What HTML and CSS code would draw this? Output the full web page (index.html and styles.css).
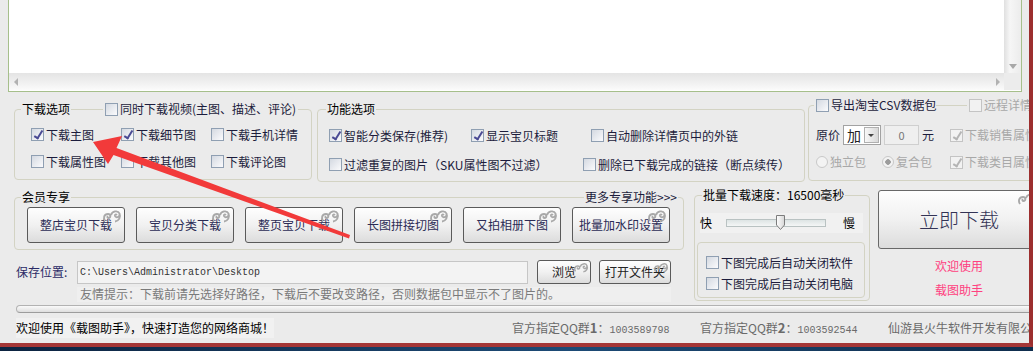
FILE: index.html
```html
<!DOCTYPE html>
<html lang="zh-CN">
<head>
    <meta charset="UTF-8">
    <title>载图助手</title>
    <link rel="stylesheet" href="styles.css">
</head>
<body>

    <div class="window">
        <!-- список ссылок -->
        <div class="listbox">
            <div class="list-area"></div>
            <div class="vscroll"><span class="arr-down"></span></div>
            <div class="hscroll"><span class="arr-left"></span><span class="arr-right"></span></div>
            <div class="corner"></div>
        </div>

        <div class="options-row">
            <div class="group g-download">
                <div class="gtitle">
                    <span class="gtitle-text">下载选项</span>
                    <label class="chk title-chk"><span class="box"></span>同时下载视频(主图、描述、评论)</label>
                </div>
                <div class="chk-grid">
                    <label class="chk on"><span class="box"></span>下载主图</label>
                    <label class="chk on"><span class="box"></span>下载细节图</label>
                    <label class="chk"><span class="box"></span>下载手机详情</label>
                    <label class="chk"><span class="box"></span>下载属性图</label>
                    <label class="chk"><span class="box"></span>下载其他图</label>
                    <label class="chk"><span class="box"></span>下载评论图</label>
                </div>
            </div>

            <div class="group g-func">
                <div class="gtitle">
                    <span class="gtitle-text">功能选项</span>
                </div>
                <div class="func-row row-a">
                    <label class="chk on"><span class="box"></span>智能分类保存(推荐)</label>
                    <label class="chk on"><span class="box"></span>显示宝贝标题</label>
                    <label class="chk"><span class="box"></span>自动删除详情页中的外链</label>
                </div>
                <div class="func-row row-b">
                    <label class="chk"><span class="box"></span>过滤重复的图片（SKU属性图不过滤）</label>
                    <label class="chk"><span class="box"></span>删除已下载完成的链接（断点续传）</label>
                </div>
            </div>

            <div class="group g-export">
                <div class="gtitle">
                    <label class="chk title-chk csv"><span class="box"></span>导出淘宝CSV数据包</label>
                    <label class="chk title-chk off"><span class="box"></span>远程详情</label>
                </div>
                <div class="export-row row-price">
                    <div class="price">
                        <span>原价</span>
                        <span class="select"><span class="select-val">加</span><span class="select-btn"></span></span>
                        <span class="num">0</span>
                        <span>元</span>
                    </div>
                    <label class="chk on off"><span class="box"></span>下载销售属性</label>
                </div>
                <div class="export-row row-pack">
                    <label class="rad off"><span class="dot"></span>独立包</label>
                    <label class="rad on off"><span class="dot"></span>复合包</label>
                    <label class="chk on off"><span class="box"></span>下载类目属性</label>
                </div>
            </div>
        </div>

        <div class="lower-row">
            <div class="left-col">
                <div class="group g-member">
                    <div class="gtitle">
                        <span class="gtitle-text">会员专享</span>
                        <span class="more">更多专享功能&gt;&gt;&gt;</span>
                    </div>
                    <div class="btn-row">
                        <button class="vip-btn">整店宝贝下载<svg class="swirl" viewBox="0 0 20 14"><path d="M3 12C1 9 2 5 6 5C9 5 9 9 6.5 9C5.5 9 5 8 5.8 7M9 6C10 2 16 1 17.5 4.5C18.5 8 14 9.5 13 7C12.5 5.5 14 5 14.8 6.2M17.5 4.5C19 8 17 12 13 12.5"/></svg></button>
                        <button class="vip-btn">宝贝分类下载<svg class="swirl" viewBox="0 0 20 14"><path d="M3 12C1 9 2 5 6 5C9 5 9 9 6.5 9C5.5 9 5 8 5.8 7M9 6C10 2 16 1 17.5 4.5C18.5 8 14 9.5 13 7C12.5 5.5 14 5 14.8 6.2M17.5 4.5C19 8 17 12 13 12.5"/></svg></button>
                        <button class="vip-btn">整页宝贝下载<svg class="swirl" viewBox="0 0 20 14"><path d="M3 12C1 9 2 5 6 5C9 5 9 9 6.5 9C5.5 9 5 8 5.8 7M9 6C10 2 16 1 17.5 4.5C18.5 8 14 9.5 13 7C12.5 5.5 14 5 14.8 6.2M17.5 4.5C19 8 17 12 13 12.5"/></svg></button>
                        <button class="vip-btn">长图拼接切图<svg class="swirl" viewBox="0 0 20 14"><path d="M3 12C1 9 2 5 6 5C9 5 9 9 6.5 9C5.5 9 5 8 5.8 7M9 6C10 2 16 1 17.5 4.5C18.5 8 14 9.5 13 7C12.5 5.5 14 5 14.8 6.2M17.5 4.5C19 8 17 12 13 12.5"/></svg></button>
                        <button class="vip-btn">又拍相册下图<svg class="swirl" viewBox="0 0 20 14"><path d="M3 12C1 9 2 5 6 5C9 5 9 9 6.5 9C5.5 9 5 8 5.8 7M9 6C10 2 16 1 17.5 4.5C18.5 8 14 9.5 13 7C12.5 5.5 14 5 14.8 6.2M17.5 4.5C19 8 17 12 13 12.5"/></svg></button>
                        <button class="vip-btn">批量加水印设置<svg class="swirl" viewBox="0 0 20 14"><path d="M3 12C1 9 2 5 6 5C9 5 9 9 6.5 9C5.5 9 5 8 5.8 7M9 6C10 2 16 1 17.5 4.5C18.5 8 14 9.5 13 7C12.5 5.5 14 5 14.8 6.2M17.5 4.5C19 8 17 12 13 12.5"/></svg></button>
                    </div>
                </div>

                <div class="save-row">
                    <span class="save-label">保存位置:</span>
                    <span class="path">C:\Users\Administrator\Desktop</span>
                    <button class="small-btn browse">浏览<svg class="swirl" viewBox="0 0 20 14"><path d="M3 12C1 9 2 5 6 5C9 5 9 9 6.5 9C5.5 9 5 8 5.8 7M9 6C10 2 16 1 17.5 4.5C18.5 8 14 9.5 13 7C12.5 5.5 14 5 14.8 6.2M17.5 4.5C19 8 17 12 13 12.5"/></svg></button>
                    <button class="small-btn open">打开文件夹<svg class="swirl" viewBox="0 0 20 14"><path d="M3 12C1 9 2 5 6 5C9 5 9 9 6.5 9C5.5 9 5 8 5.8 7M9 6C10 2 16 1 17.5 4.5C18.5 8 14 9.5 13 7C12.5 5.5 14 5 14.8 6.2M17.5 4.5C19 8 17 12 13 12.5"/></svg></button>
                </div>
                <div class="hint">友情提示：下载前请先选择好路径，下载后不要改变路径，否则数据包中显示不了图片的。</div>
            </div>

            <div class="group g-speed">
                <div class="gtitle">
                    <span class="gtitle-text">批量下载速度：16500毫秒</span>
                </div>
                <div class="slider-row">
                    <span>快</span>
                    <span class="track">
                        <svg class="thumb" viewBox="0 0 11 17"><defs><linearGradient id="tg" x1="0" y1="0" x2="1" y2="0"><stop offset="0" stop-color="#ffffff"/><stop offset="1" stop-color="#d6d6d6"/></linearGradient></defs><path d="M1.5 1.5H9.5V11L5.5 15.5L1.5 11Z" fill="url(#tg)" stroke="#7c7c7c"/></svg>
                    </span>
                    <span class="slow">慢</span>
                </div>
                <div class="auto-box">
                    <label class="chk"><span class="box"></span>下图完成后自动关闭软件</label>
                    <label class="chk"><span class="box"></span>下图完成后自动关闭电脑</label>
                </div>
            </div>

            <div class="go-col">
                <button class="go-btn">立即下载<svg class="swirl" viewBox="0 0 20 14"><path d="M3 12C1 9 2 5 6 5C9 5 9 9 6.5 9C5.5 9 5 8 5.8 7M9 6C10 2 16 1 17.5 4.5C18.5 8 14 9.5 13 7C12.5 5.5 14 5 14.8 6.2M17.5 4.5C19 8 17 12 13 12.5"/></svg></button>
                <div class="welcome">欢迎使用<br>载图助手</div>
            </div>
        </div>

        <div class="progress"></div>

        <div class="status">
            <div class="panel main"><span>欢迎使用《载图助手》，快速打造您的网络商城！</span></div>
            <div class="panel qq">官方指定QQ群<b>1</b>：<span class="qq-num">1003589798</span></div>
            <div class="panel qq">官方指定QQ群<b>2</b>：<span class="qq-num">1003592544</span></div>
            <div class="panel qq">仙游县火牛软件开发有限公司</div>
        </div>

        <!-- красная стрелка поверх окна -->
        <svg class="arrow-overlay" width="1029" height="343" viewBox="0 0 1029 343">
            <polygon points="93,142 122,136 116.5,148 350,235 349,238.5 113.5,155 108,164" fill="#f23a3a"/>
        </svg>
    </div>

</body>
</html>
```

FILE: styles.css
```css
* {
    box-sizing: border-box;
}

html, body {
    margin: 0;
}

body {
    width: 1033px;
    height: 351px;
    overflow: hidden;
    background: linear-gradient(90deg, #0c2340, #1d4b76 55%, #0f2d4d);
    font: 12px/14px "Noto Sans CJK SC", "DejaVu Sans", sans-serif;
    color: #1c1c3c;
}

button {
    font: inherit;
    padding: 0;
    cursor: pointer;
}

.window {
    position: relative;
    width: 1033px;
    height: 347px;
    background: #ebebeb;
    border-right: 4px solid #9c2e2e;
    border-bottom: 4px solid #a43636;
    overflow: hidden;
}

/* list box */
.listbox {
    display: grid;
    grid-template-columns: 1fr 17px;
    grid-template-rows: 1fr 17px;
    width: 1014px;
    height: 93px;
    margin: -1px 0 0 8px;
    padding-bottom: 1px;
    border: 1px solid #a6bf8b;
    background: #fff;
}

.vscroll {
    display: flex;
    align-items: flex-end;
    justify-content: center;
    padding-bottom: 4px;
    background: linear-gradient(90deg, #e0e0e0, #f6f6f6 35%, #ececec);
}

.arr-down {
    width: 0;
    border-left: 4px solid transparent;
    border-right: 4px solid transparent;
    border-top: 5px solid #a8a8a8;
}

.hscroll {
    display: flex;
    align-items: center;
    justify-content: space-between;
    padding: 0 4px 0 5px;
    background: linear-gradient(#e4e4e4, #f1f1f1 60%, #fbfbfb);
}

.arr-left {
    border-top: 4px solid transparent;
    border-bottom: 4px solid transparent;
    border-right: 4px solid #b2b2b2;
}

.arr-right {
    border-top: 4px solid transparent;
    border-bottom: 4px solid transparent;
    border-left: 4px solid #b2b2b2;
}

.corner {
    background: #ececec;
}

/* groups */
.options-row {
    display: flex;
    align-items: flex-start;
    margin-top: 13px;
}

.group {
    flex: none;
    border: 1px solid #d3d3c3;
    border-radius: 4px;
}

.gtitle {
    display: flex;
    align-items: center;
    height: 14px;
    margin-top: -8px;
    white-space: nowrap;
}

.gtitle > * {
    flex: none;
}

.gtitle-text {
    background: #ebebeb;
    padding: 0 1px;
    margin-left: 6px;
    color: #000;
}

.title-chk {
    background: #ebebeb;
    padding: 0 2px;
}

.g-download {
    width: 298px;
    height: 71px;
    margin: 4px 0 0 14px;
}

.g-download .title-chk {
    margin-left: 32px;
}

.chk-grid {
    display: grid;
    grid-template-columns: 90px 90px auto;
    grid-auto-rows: 27px;
    align-items: center;
    margin: 5px 0 0 16px;
}

.g-func {
    width: 488px;
    height: 73px;
    margin: 4px 0 0 5px;
}

.g-func .gtitle-text {
    margin-left: 8px;
}

.func-row {
    display: grid;
    align-items: center;
    height: 29px;
    margin-left: 11px;
}

.func-row.row-a {
    grid-template-columns: 142px 120px auto;
    margin-top: 5px;
}

.func-row.row-b {
    grid-template-columns: 254px auto;
}

.g-export {
    width: 260px;
    height: 76px;
    margin-left: 3px;
}

.g-export .title-chk.csv {
    width: 122px;
    margin-left: 5px;
}

.g-export .title-chk.off {
    margin-left: 31px;
}

.export-row {
    display: grid;
    grid-template-columns: 134px auto;
    align-items: center;
    height: 20px;
    margin-left: 7px;
}

.row-price {
    margin-top: 13px;
}

.row-pack {
    grid-template-columns: 66px 68px auto;
    margin-top: 7px;
}

.price {
    display: flex;
    align-items: center;
    gap: 3px;
}

.select {
    display: flex;
    width: 38px;
    height: 20px;
    border: 1px solid #a2a2a2;
    background: #fff;
}

.select-val {
    flex: 1;
    padding-left: 3px;
    font-size: 14px;
    line-height: 18px;
    color: #222;
}

.select-btn {
    width: 15px;
    margin: 1px;
    border: 1px solid #b0b0b0;
    background: linear-gradient(90deg, #f8f8f8, #d8d8d8);
    position: relative;
}

.select-btn::after {
    content: "";
    position: absolute;
    left: 3px;
    top: 6px;
    border-left: 3px solid transparent;
    border-right: 3px solid transparent;
    border-top: 3px solid #444;
}

.num {
    width: 35px;
    height: 20px;
    border: 1px solid #cfcfcf;
    background: #efefef;
    text-align: center;
    line-height: 18px;
    color: #777;
    font-size: 11px;
}

/* checkbox & radio */
.chk, .rad {
    display: inline-flex;
    align-items: center;
    gap: 2px;
    white-space: nowrap;
}

.box {
    position: relative;
    flex: none;
    width: 13px;
    height: 13px;
    border: 1px solid #8f9fb2;
    background: linear-gradient(135deg, #d4d9e1, #fbfbfd);
}

.chk.on .box::after {
    content: "";
    position: absolute;
    left: 4px;
    top: 0;
    width: 3px;
    height: 8px;
    border: solid #4a4a94;
    border-width: 0 2px 2px 0;
    transform: rotate(32deg);
}

.off {
    color: #a8a8a8;
}

.off .box {
    border-color: #c4c4c4;
    background: #f2f2f2;
}

.chk.on.off .box::after {
    border-color: #b4b4b4;
}

.dot {
    flex: none;
    width: 12px;
    height: 12px;
    border: 1px solid #c8c8c8;
    border-radius: 50%;
    background: #f3f3f3;
}

.rad.on .dot {
    background: radial-gradient(circle, #9c9c9c 0 2.5px, #f3f3f3 3px);
}

/* lower part */
.lower-row {
    display: flex;
    align-items: flex-start;
    height: 115px;
    margin-top: 8px;
}

.left-col {
    flex: none;
    width: 670px;
    margin-left: 14px;
}

.g-member {
    height: 53px;
    margin-top: 7px;
}

.g-member .gtitle {
    justify-content: space-between;
}

.more {
    background: #ebebeb;
    padding: 0 1px;
    margin-right: 5px;
}

.btn-row {
    display: flex;
    gap: 11px;
    margin: 3px 0 0 12px;
}

.vip-btn, .small-btn, .go-btn {
    position: relative;
    flex: none;
    display: flex;
    align-items: center;
    justify-content: center;
    border: 1px solid #5a5a5a;
    border-radius: 3px;
    background: linear-gradient(#fefefe, #f1f1f1 50%, #dcdcdc);
    color: #2b2b55;
}

.vip-btn {
    width: 98px;
    height: 36px;
}

.swirl {
    position: absolute;
    top: 1px;
    right: 2px;
    width: 20px;
    height: 14px;
    fill: none;
    stroke: #a9a9a9;
    stroke-width: 1.9;
}

.save-row {
    display: flex;
    align-items: center;
    height: 24px;
    margin: 10px 0 0 2px;
}

.save-label {
    flex: none;
    width: 61px;
    color: #2a2a66;
}

.path {
    flex: none;
    display: flex;
    align-items: center;
    width: 451px;
    height: 23px;
    padding-left: 2px;
    border: 1px solid #c6c6c6;
    background: #f3f3f3;
    font: 10px "Liberation Mono", monospace;
    color: #333;
}

.small-btn {
    height: 24px;
    color: #222;
}

.small-btn .swirl {
    width: 16px;
    height: 11px;
    right: 1px;
}

.small-btn.browse {
    width: 54px;
    margin-left: 9px;
}

.small-btn.open {
    width: 72px;
    margin-left: 8px;
}

.hint {
    width: 594px;
    height: 15px;
    margin: 3px 0 0 63px;
    padding-left: 3px;
    background: #efefef;
    color: #7a7a7a;
    white-space: nowrap;
}

.g-speed {
    width: 176px;
    height: 106px;
    margin: 5px 0 0 10px;
}

.g-speed .gtitle-text {
    margin-left: 7px;
}

.slider-row {
    display: flex;
    align-items: center;
    height: 20px;
    margin: 11px 6px 0 5px;
    background: #f1f1f1;
    color: #000;
}

.track {
    flex: none;
    position: relative;
    width: 100px;
    height: 8px;
    margin-left: 14px;
    border: 1px solid #b9c2c2;
    background: linear-gradient(#dde4e4, #f4f6f6);
}

.thumb {
    position: absolute;
    left: 48px;
    top: -6px;
    width: 11px;
    height: 17px;
}

.slow {
    margin-left: 17px;
}

.auto-box {
    display: flex;
    flex-direction: column;
    width: 168px;
    height: 56px;
    margin: 9px 0 0 2px;
    padding: 9px 0 0 8px;
    border: 1px solid #d3d3c3;
    border-radius: 4px;
}

.auto-box .chk {
    height: 21px;
}

.go-col {
    flex: none;
    width: 162px;
    margin-left: 8px;
}

.go-btn {
    width: 162px;
    height: 59px;
    border-color: #686868;
    font-size: 20px;
    font-weight: 300;
    color: #333355;
}

.welcome {
    margin-top: 5px;
    text-align: center;
    line-height: 24px;
    color: #ff4080;
}

.progress {
    width: 1030px;
    height: 8px;
    margin-left: 16px;
    border: 1px solid #b2b2b2;
    border-bottom-color: #9c9c9c;
    border-radius: 4px;
    background: linear-gradient(#fafafa, #dedede);
}

.status {
    display: flex;
    align-items: center;
    height: 30px;
}

.panel {
    flex: none;
    padding-left: 16px;
    white-space: nowrap;
}

.panel.main {
    width: 496px;
    color: #000;
}

.panel.main span {
    display: inline-block;
    padding: 3px 0;
    background: #f1f1f1;
}

.panel.qq {
    width: 188px;
    color: #6a6a6a;
}

.panel.qq b {
    font-size: 13px;
}

.qq-num {
    font: 10px "Liberation Mono", monospace;
}

.arrow-overlay {
    position: absolute;
    left: 0;
    top: 0;
    pointer-events: none;
}
```
